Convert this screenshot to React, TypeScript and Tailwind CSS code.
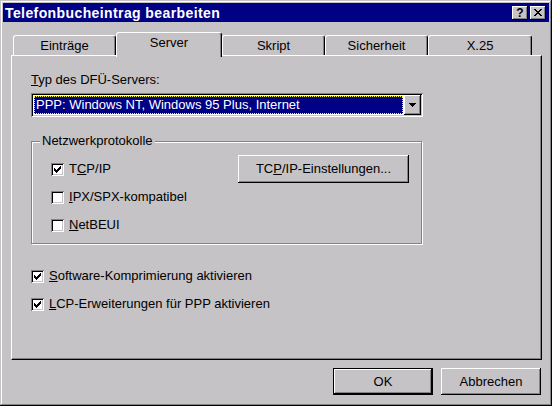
const font = { fontFamily: '"Liberation Sans", Arial, sans-serif' };

const raised =
  "shadow-[inset_-1px_-1px_0_#000,inset_1px_1px_0_#fff,inset_-2px_-2px_0_#848284,inset_2px_2px_0_#c6c3c6]";
const sunken =
  "shadow-[inset_1px_1px_0_#848284,inset_-1px_-1px_0_#fff,inset_2px_2px_0_#000,inset_-2px_-2px_0_#c6c3c6]";

// 7x7 pixel tick like the old Windows check box
const tickRows = [[6], [5, 6], [0, 4, 5, 6], [0, 1, 3, 4, 5], [0, 1, 2, 3, 4], [1, 2, 3], [2]];

function CheckBox({ checked }: { checked?: boolean }) {
  return (
    <div className={`relative h-[13px] w-[13px] shrink-0 bg-white ${sunken}`}>
      {checked && (
        <svg width="7" height="7" viewBox="0 0 7 7" className="absolute left-[3px] top-[3px]" shapeRendering="crispEdges">
          {tickRows.map((row, y) => row.map((x) => <rect key={`${x}-${y}`} x={x} y={y} width="1" height="1" fill="#000" />))}
        </svg>
      )}
    </div>
  );
}

function Tab({ label, className, active }: { label: string; className: string; active?: boolean }) {
  return (
    <div
      className={`flex justify-center rounded-t-[3px] border-t border-l border-r border-t-white border-l-white border-r-black pt-[2px] leading-4 shadow-[inset_-1px_0_0_#848284] ${
        active ? "relative z-10 -mb-[2px] h-[25px] bg-[#c6c3c6]" : "h-[20px]"
      } ${className}`}
    >
      {label}
    </div>
  );
}

export default function App() {
  return (
    <div
      className="flex h-[406px] w-[552px] flex-col bg-[#c6c3c6] p-[3px] text-[13px] text-black shadow-[inset_-1px_-1px_0_#000,inset_1px_1px_0_#c6c3c6,inset_-2px_-2px_0_#848284,inset_2px_2px_0_#fff]"
      style={font}
    >
      {/* Title bar */}
      <div className="flex h-[19px] items-center bg-[#000084] pl-[2px] pr-[3px]">
        <span className="flex-1 text-[14px] font-bold leading-4 tracking-[0.4px] text-white">Telefonbucheintrag bearbeiten</span>
        <div className={`flex h-[14px] w-[16px] items-center justify-center bg-[#c6c3c6] text-[12px] font-bold leading-none ${raised}`}>?</div>
        <div className={`ml-[2px] flex h-[14px] w-[16px] items-center justify-center bg-[#c6c3c6] ${raised}`}>
          <svg width="8" height="7" viewBox="0 0 8 7" shapeRendering="crispEdges" className="-mt-[1px]">
            <path d="M0 0h2v1h-2zM6 0h2v1h-2zM1 1h2v1h-2zM5 1h2v1h-2zM2 2h4v1h-4zM3 3h2v1h-2zM2 4h4v1h-4zM1 5h2v1h-2zM5 5h2v1h-2zM0 6h2v1h-2zM6 6h2v1h-2z" fill="#000" />
          </svg>
        </div>
      </div>

      {/* Tabs */}
      <div className="ml-[10px] mt-[10px] flex items-end">
        <Tab label="Einträge" className="w-[103px]" />
        <Tab label="Server" className="w-[106px]" active />
        <Tab label="Skript" className="w-[103px]" />
        <Tab label="Sicherheit" className="w-[103px]" />
        <Tab label="X.25" className="w-[104px]" />
      </div>

      {/* Tab panel */}
      <div className="ml-[8px] flex h-[305px] w-[531px] flex-col border-t border-l border-r border-b border-t-white border-l-white border-r-black border-b-black pl-[19px] pt-[16px] leading-4 shadow-[inset_-1px_-1px_0_#848284]">
        <div>
          <span className="underline">T</span>yp des DFÜ-Servers:
        </div>

        <div className={`mt-[5px] flex h-[24px] w-[392px] bg-white p-[2px] ${sunken}`}>
          <div className="m-[1px] flex flex-1 items-center border border-dotted border-[#ffff00] bg-[#000084] pl-[1px] text-white">
            PPP: Windows NT, Windows 95 Plus, Internet
          </div>
          <div className={`flex w-[17px] items-center justify-center bg-[#c6c3c6] ${raised}`}>
            <svg width="7" height="4" viewBox="0 0 7 4" shapeRendering="crispEdges">
              <path d="M0 0h7v1h-7zM1 1h5v1h-5zM2 2h3v1h-3zM3 3h1v1h-1z" fill="#000" />
            </svg>
          </div>
        </div>

        {/* Group box */}
        <div className="relative mt-[24px] flex h-[103px] w-[391px] border border-[#848284] pl-[19px] pr-[12px] pt-[13px] shadow-[inset_1px_1px_0_#fff,1px_1px_0_#fff]">
          <span className="absolute -top-[9px] left-[8px] bg-[#c6c3c6] px-[2px]">Netzwerkprotokolle</span>
          <div className="flex flex-1 flex-col">
            <div className="flex h-[28px] items-center gap-[5px]">
              <CheckBox checked />
              <span>
                T<span className="underline">C</span>P/IP
              </span>
            </div>
            <div className="flex h-[28px] items-center gap-[5px]">
              <CheckBox />
              <span>
                <span className="underline">I</span>PX/SPX-kompatibel
              </span>
            </div>
            <div className="flex h-[28px] items-center gap-[5px]">
              <CheckBox />
              <span>
                <span className="underline">N</span>etBEUI
              </span>
            </div>
          </div>
          <div className={`flex h-[28px] w-[171px] items-center justify-center ${raised}`}>
            <span>
              TC<span className="underline">P</span>/IP-Einstellungen...
            </span>
          </div>
        </div>

        <div className="mt-[18px] flex h-[28px] items-center gap-[5px]">
          <CheckBox checked />
          <span>
            <span className="underline">S</span>oftware-Komprimierung aktivieren
          </span>
        </div>
        <div className="flex h-[28px] items-center gap-[5px]">
          <CheckBox checked />
          <span>
            <span className="underline">L</span>CP-Erweiterungen für PPP aktivieren
          </span>
        </div>
      </div>

      {/* Buttons */}
      <div className="mt-[8px] flex justify-end gap-[8px] pr-[8px] leading-4">
        <div className="h-[27px] w-[100px] border border-black">
          <div className={`flex h-full items-center justify-center ${raised}`}>OK</div>
        </div>
        <div className={`flex h-[27px] w-[100px] items-center justify-center ${raised}`}>Abbrechen</div>
      </div>
    </div>
  );
}
